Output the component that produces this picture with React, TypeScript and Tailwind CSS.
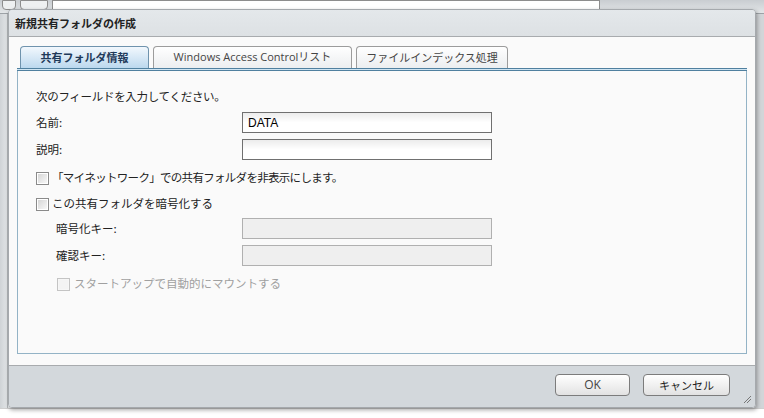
const jp = { fontFamily: '"Noto Sans CJK JP", "DejaVu Sans", sans-serif' };

function Checkbox({ disabled }: { disabled?: boolean }) {
  return (
    <div
      className={`w-[13px] h-[13px] border p-[1px] ${
        disabled ? 'border-[#c4c4c4] bg-[#f6f6f6]' : 'border-[#8a8a8a] bg-white'
      }`}
    >
      <div
        className={`w-full h-full ${
          disabled ? 'bg-[#f3f3f3]' : 'bg-gradient-to-br from-[#d6d6d6] to-[#f7f7f7]'
        }`}
      />
    </div>
  );
}

function Field({ label, value, disabled, indent }: { label: string; value?: string; disabled?: boolean; indent?: boolean }) {
  return (
    <div className="flex items-center h-[21px]">
      <div className={`w-[206px] text-[11.5px] text-[#222] ${indent ? 'pl-[20px]' : ''}`}>{label}</div>
      <div
        className={`w-[250px] h-[21px] border px-[5px] flex items-center text-[12px] text-black ${
          disabled
            ? 'border-[#b0b0b0] bg-[#efefef]'
            : 'border-[#707070] bg-gradient-to-b from-[#ececec] via-white to-white'
        }`}
        style={{ fontFamily: '"Liberation Sans", Arial, sans-serif' }}
      >
        {value}
      </div>
    </div>
  );
}

function Tab({ label, active, width, latin }: { label: string; active?: boolean; width: string; latin?: boolean }) {
  return (
    <div
      className={`${width} h-[22px] rounded-t-[4px] border border-b-0 flex items-center justify-center text-[11px] ${
        active
          ? 'border-[#6f93ad] bg-gradient-to-b from-[#f2f8fd] to-[#bcd8ee] font-bold text-[#1f3a5a]'
          : 'border-[#9c9c9c] bg-gradient-to-b from-white to-[#eceef0] text-[#444] font-normal'
      }`}
      style={latin ? { fontFamily: '"Open Sans", "Noto Sans CJK JP", sans-serif' } : undefined}
    >
      {label}
    </div>
  );
}

export default function App() {
  return (
    <div className="relative w-[764px] h-[418px] overflow-hidden bg-[#e9ecee]" style={jp}>
      {/* app behind the dialog */}
      <div className="h-[14px] bg-gradient-to-b from-[#c9cdd1] to-[#e3e6e8] border-b border-[#9da2a6] flex gap-[4px] pl-[2px]">
        <div className="w-[14px] h-[10px] border border-[#8d8d8d] rounded-b-[4px] bg-[#eef0f1]" />
        <div className="w-[28px] h-[10px] border border-[#8d8d8d] rounded-b-[4px] bg-[#eef0f1]" />
        <div className="w-[548px] h-[10px] border border-[#8d8d8d] bg-white" />
      </div>
      <div className="absolute left-0 top-[14px] w-[8px] h-[404px] bg-gradient-to-r from-[#cfd3d6] to-[#e2e5e7] border-r border-[#b5b9bc]" />
      <div className="absolute right-0 top-[14px] w-[10px] h-[404px] bg-[#d2d5d8]" />
      <div className="absolute left-0 bottom-0 w-[764px] h-[10px] bg-white border-t border-[#cfcfcf]" />

      {/* dialog */}
      <div className="absolute left-[8px] top-[9px] w-[748px] h-[399px] flex flex-col rounded-[4px] border border-[#a5a9ad] shadow-[1px_2px_4px_rgba(0,0,0,0.35)] overflow-hidden">
        <div className="h-[27px] shrink-0 bg-gradient-to-b from-[#e4e8eb] to-[#dde1e4] border-b border-[#a8abae] flex items-center pl-[6px] text-[11px] font-bold text-[#222]">
          新規共有フォルダの作成
        </div>

        <div className="flex-1 bg-[#fafafa] px-[8px] pt-[9px] pb-[11px] flex flex-col border-b border-[#a8abae]">
          <div className="flex items-end gap-[4px] pl-[3px]">
            <Tab label="共有フォルダ情報" active width="w-[129px]" />
            <Tab label="Windows Access Controlリスト" width="w-[199px]" latin />
            <Tab label="ファイルインデックス処理" width="w-[152px]" />
          </div>
          <div className="h-[3px] border-y border-[#50809f] bg-[#cfe5f3]" />
          <div className="flex-1 border border-t-0 border-[#93b3c6] pl-[18px] pt-[18px]">
            <div className="h-[16px] flex items-center text-[11.5px] text-[#222] tracking-[-0.3px]">次のフィールドを入力してください。</div>
            <div className="mt-[7px]">
              <Field label="名前:" value="DATA" />
            </div>
            <div className="mt-[6px]">
              <Field label="説明:" />
            </div>
            <div className="mt-[8px] h-[20px] flex items-center gap-[3px] text-[11.5px] text-[#222]">
              <Checkbox />
              <span className="tracking-[-0.7px]">「マイネットワーク」での共有フォルダを非表示にします。</span>
            </div>
            <div className="mt-[6px] h-[20px] flex items-center gap-[3px] text-[11.5px] text-[#222]">
              <Checkbox />
              <span>この共有フォルダを暗号化する</span>
            </div>
            <div className="mt-[4px]">
              <Field label="暗号化キー:" disabled indent />
            </div>
            <div className="mt-[6px]">
              <Field label="確認キー:" disabled indent />
            </div>
            <div className="mt-[8px] h-[20px] flex items-center gap-[4px] pl-[21px] text-[11.5px] text-[#a0a0a0]">
              <Checkbox disabled />
              <span>スタートアップで自動的にマウントする</span>
            </div>
          </div>
        </div>

        <div className="relative h-[41px] shrink-0 bg-[#d3d8dc] flex justify-end items-start pt-[8px] pr-[25px] gap-[13px]">
          <button className="w-[75px] h-[22px] rounded-[4px] border border-[#7c7c7c] bg-gradient-to-b from-white to-[#e2e2e2] text-[12px] text-[#444]" style={{ fontFamily: '"Open Sans", sans-serif' }}>
            OK
          </button>
          <button className="w-[87px] h-[22px] rounded-[4px] border border-[#7c7c7c] bg-gradient-to-b from-white to-[#e2e2e2] text-[11px] text-[#222]">
            キャンセル
          </button>
          <svg className="absolute right-[3px] bottom-[3px]" width="9" height="9" viewBox="0 0 9 9">
            <path d="M1 8 L8 1 M4 8 L8 4" stroke="#777" strokeWidth="1" />
          </svg>
        </div>
      </div>
    </div>
  );
}
